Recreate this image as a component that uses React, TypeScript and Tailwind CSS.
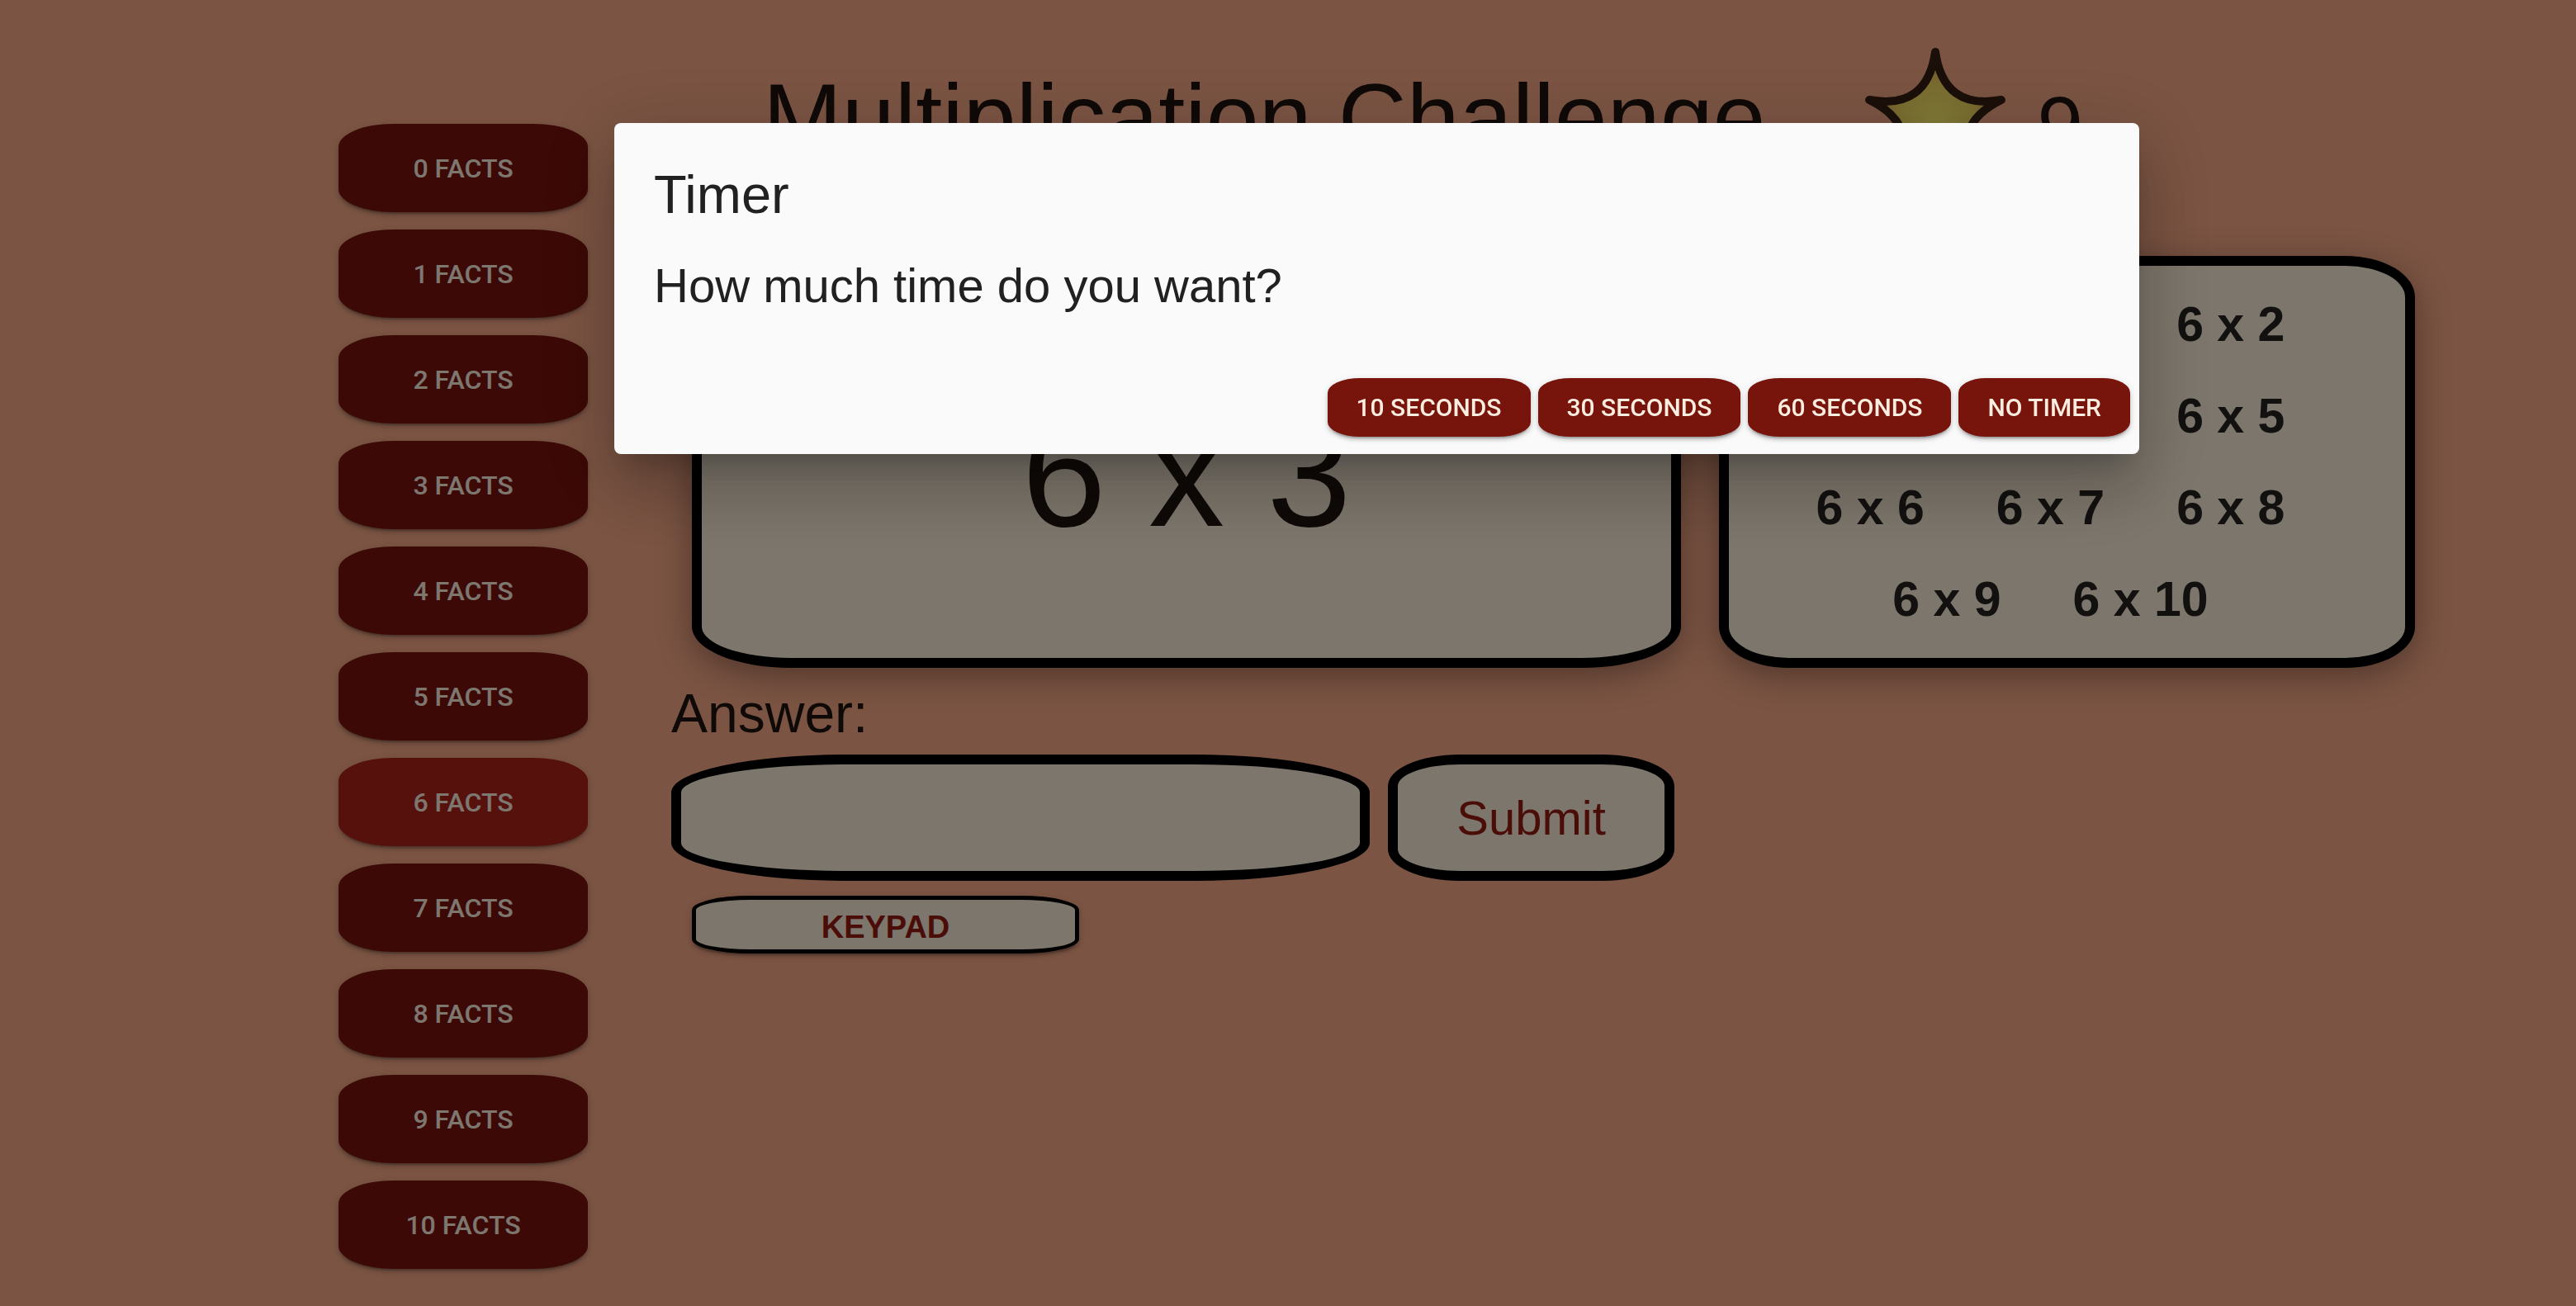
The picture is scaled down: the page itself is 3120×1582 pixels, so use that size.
import type { ReactNode } from 'react'

const TABLES = Array.from({ length: 11 }, (_, i) => i)
const TIMERS = ['10 Seconds', '30 Seconds', '60 Seconds', 'No Timer']

const btnShadow = 'shadow-[0_6px_2px_-4px_rgba(0,0,0,0.2),0_4px_4px_0_rgba(0,0,0,0.14),0_2px_10px_0_rgba(0,0,0,0.12)]'

function Star() {
  // five point star, concave sides, tips rounded by the stroke join
  return (
    <svg width="184" height="172" viewBox="0 0 184 172" className="ml-[113px] shrink-0">
      <defs>
        <radialGradient id="starFill" cx="50%" cy="55%" r="55%">
          <stop offset="0%" stopColor="#fff46c" />
          <stop offset="55%" stopColor="#f3d860" />
          <stop offset="100%" stopColor="#d99656" />
        </radialGradient>
      </defs>
      <path
        d="M92 8 Q101.87 78.41 171.89 66.04 Q107.98 97.19 141.38 159.96 Q92 108.8 42.62 159.96 Q76.02 97.19 12.11 66.04 Q82.13 78.41 92 8 Z"
        fill="url(#starFill)"
        stroke="#342012"
        strokeWidth="10"
        strokeLinejoin="round"
      />
    </svg>
  )
}

function Card({ className, children }: { className: string; children: ReactNode }) {
  return (
    <div className={`flex h-[499px] items-center justify-center rounded-[10%] border-[12px] border-black bg-[#faecd8] shadow-[0_10px_40px_rgba(0,0,0,0.35)] ${className}`}>
      {children}
    </div>
  )
}

export default function App() {
  const table = 6
  const factor = 3

  return (
    <div className="relative min-h-screen overflow-hidden bg-[#f6a886] font-['Liberation_Sans',Arial,sans-serif] text-[#1e140e]">
      <div className="flex">
        <aside className="ml-[410px] mt-[150px] flex w-[302px] shrink-0 flex-col gap-[21px] pb-[38px]">
          {TABLES.map((t) => (
            <button
              key={t}
              className={`h-[107px] w-[302px] rounded-[22%/26%] font-['Roboto',sans-serif] text-[32px] font-medium uppercase text-[#fbeee0] ${btnShadow} ${t === table ? 'bg-[#ae221a]' : 'bg-[#78120c]'}`}
            >
              {t} Facts
            </button>
          ))}
        </aside>

        <main className="ml-[101px] pt-[55px]">
          <header className="flex items-start">
            <h1 className="ml-[111px] mt-[30px] whitespace-nowrap text-[115px] font-normal leading-none">
              Multiplication Challenge
            </h1>
            <Star />
            <span className="ml-[32px] mt-[47px] text-[100px] leading-none">9</span>
          </header>

          <section className="mt-[83px] flex gap-[46px] pl-[25px]">
            <Card className="w-[1198px] pt-[26px]">
              <span className="text-[184px] leading-none">{table} x {factor}</span>
            </Card>
            <Card className="w-[843px] pr-[40px]">
              <div className="flex w-[700px] flex-wrap justify-center gap-x-[87px] text-[59px] font-bold leading-[111px] text-[#262220]">
                {TABLES.map((t) => (
                  <span key={t} className="whitespace-nowrap">{table} x {t}</span>
                ))}
              </div>
            </Card>
          </section>

          <p className="mt-[22px] text-[66px] leading-none">Answer:</p>
          <div className="mt-[17px] flex gap-[22px]">
            <input
              type="text"
              aria-label="Answer"
              className="h-[153px] w-[846px] rounded-[25%/30%] border-[12px] border-black bg-[#faecd8] px-[40px] text-[60px] outline-none"
            />
            <button className="h-[153px] w-[347px] rounded-[25%] border-[12px] border-black bg-[#faecd8] text-[58px] text-[#941a10]">
              Submit
            </button>
          </div>
          <button className={`ml-[25px] mt-[18px] h-[70px] w-[469px] rounded-[15%/25%] border-[5px] border-black bg-[#faecd8] pt-[6px] text-[38px] font-bold uppercase leading-none text-[#941a10] ${btnShadow}`}>
            Keypad
          </button>
        </main>
      </div>

      <div className="fixed inset-0 bg-black/50" />

      <div
        role="dialog"
        className="fixed left-[744px] top-[149px] flex h-[401px] w-[1847px] flex-col rounded-[8px] bg-[#fafafa] text-[#212121] shadow-[0_22px_30px_-14px_rgba(0,0,0,0.2),0_48px_76px_6px_rgba(0,0,0,0.14),0_18px_92px_16px_rgba(0,0,0,0.12)]"
      >
        <div className="px-[48px] pt-[54px]">
          <h2 className="text-[65px] font-normal leading-none">Timer</h2>
          <p className="mt-[49px] text-[58px] leading-none">How much time do you want?</p>
        </div>
        <div className="mt-auto flex justify-end gap-[9px] pb-[21px] pr-[11px]">
          {TIMERS.map((label) => (
            <button
              key={label}
              className={`h-[71px] rounded-[16%/25%] bg-[#77140c] px-[35px] font-['Roboto',sans-serif] text-[30px] font-medium uppercase text-[#fbeee0] ${btnShadow}`}
            >
              {label}
            </button>
          ))}
        </div>
      </div>
    </div>
  )
}
